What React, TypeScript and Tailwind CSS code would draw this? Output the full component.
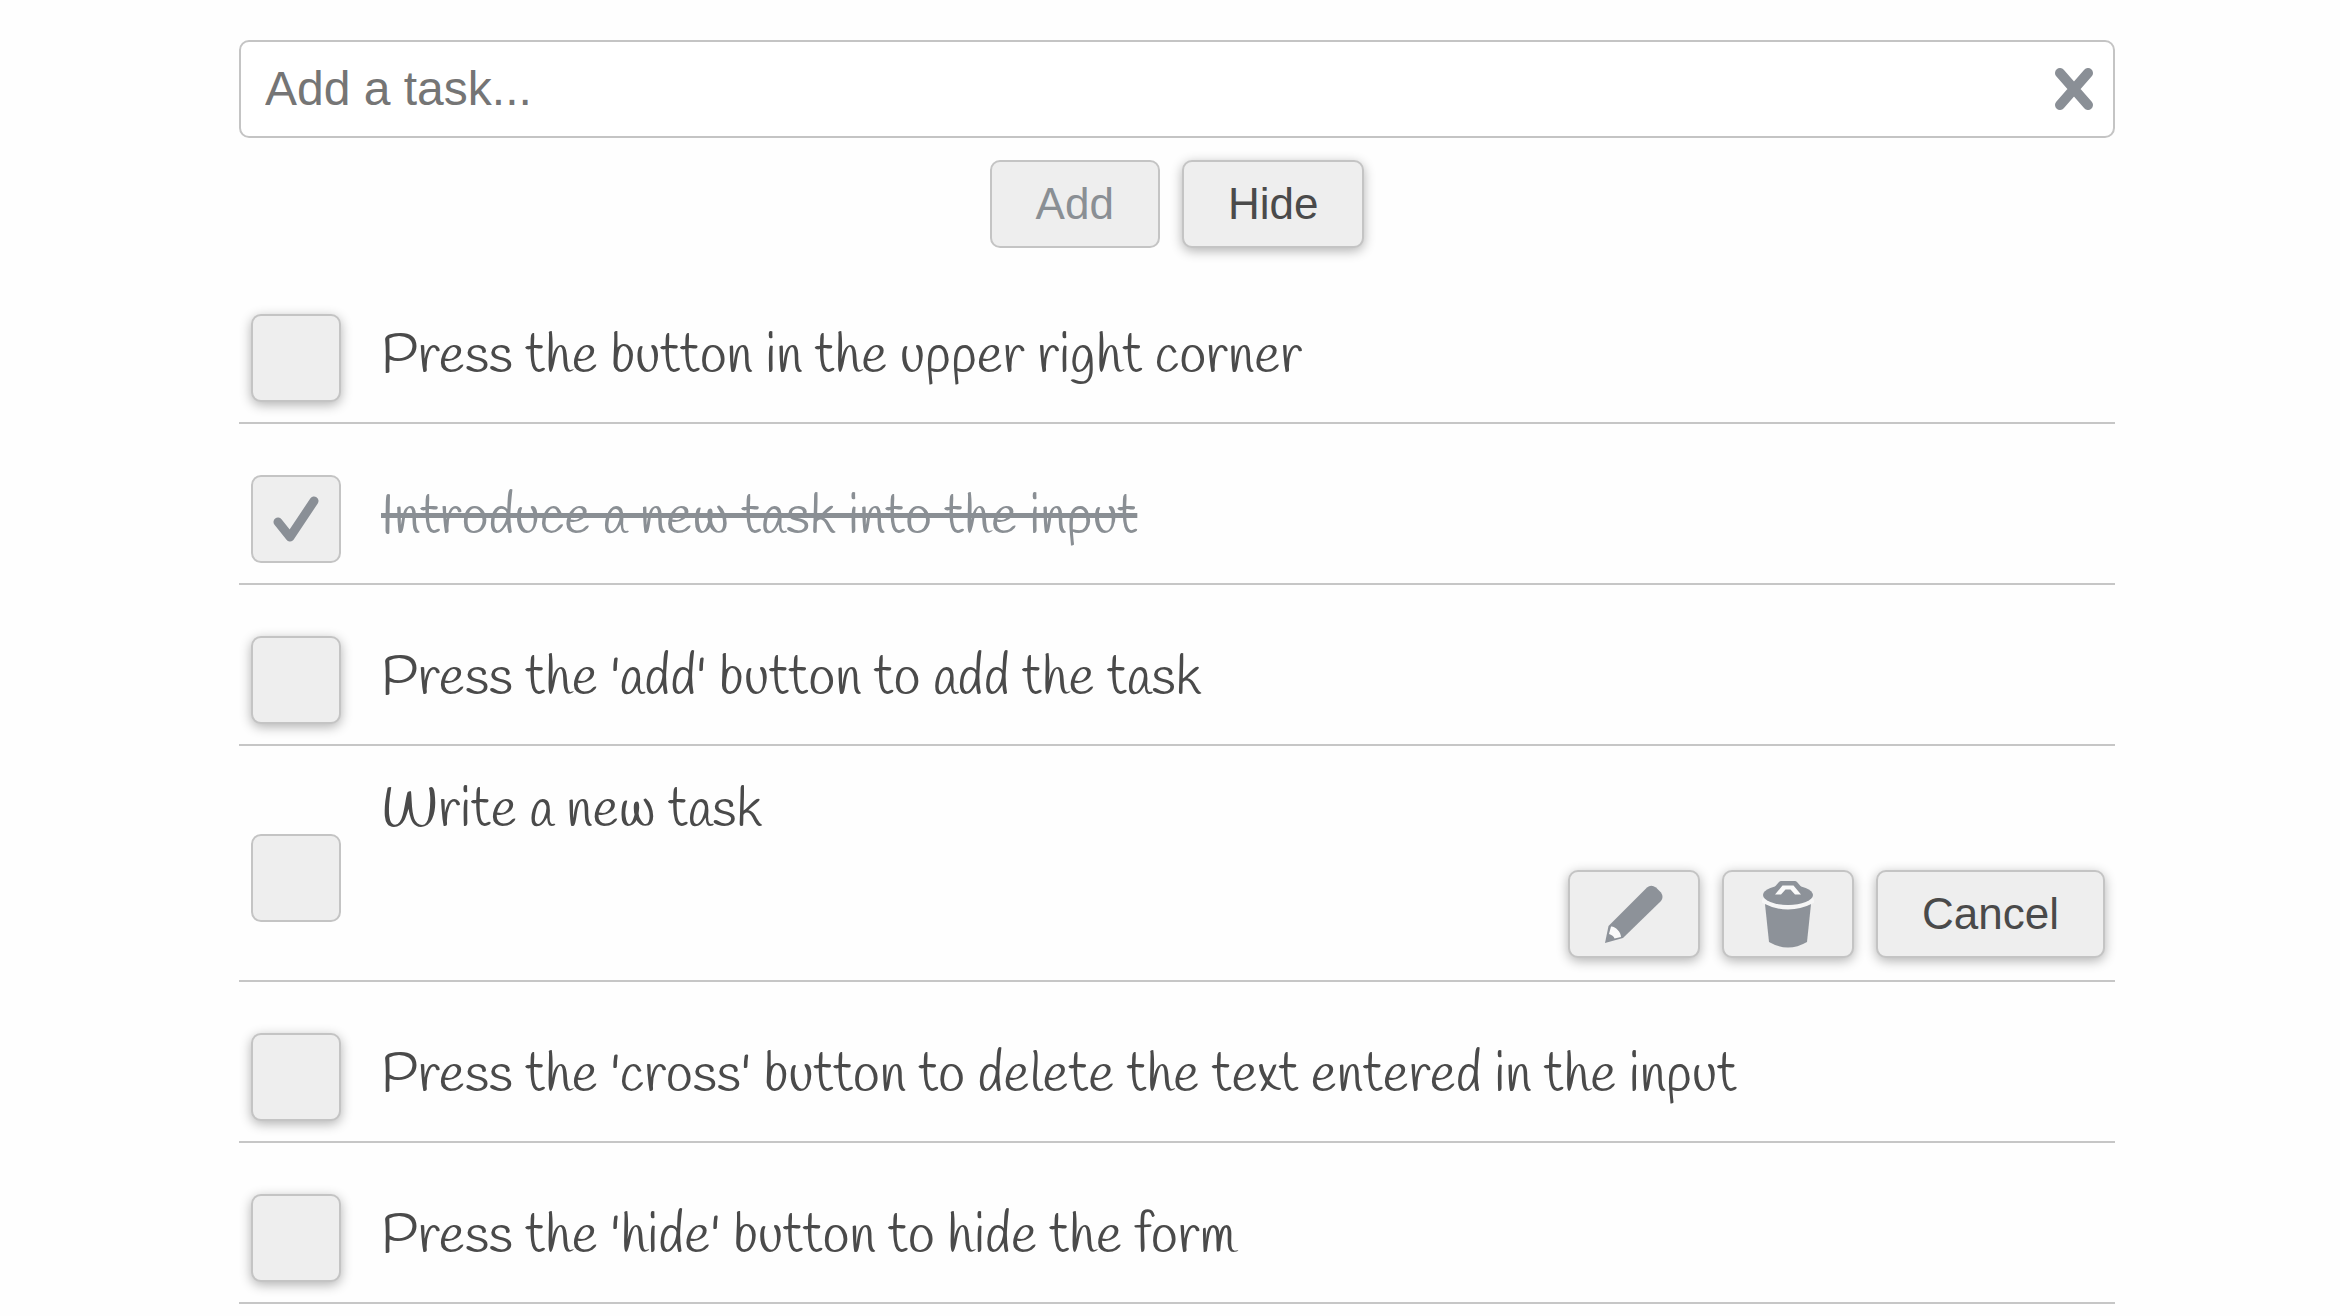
import React from "react";

type Task = { id: string; text: string; state?: "done" | "editing" };

const tasks: Task[] = [
  { id: "press", text: "Press the button in the upper right corner" },
  { id: "introduce", text: "Introduce a new task into the input", state: "done" },
  { id: "add", text: "Press the 'add' button to add the task" },
  { id: "write", text: "Write a new task", state: "editing" },
  { id: "cross", text: "Press the 'cross' button to delete the text entered in the input" },
  { id: "hide", text: "Press the 'hide' button to hide the form" },
];

const buttonBase =
  "flex h-[88px] items-center justify-center rounded-[10px] border-2 border-[#c4c4c4] bg-[#eeeeee]";
const raised = "shadow-[0_3px_12px_rgba(0,0,0,0.3)]";

function CrossIcon() {
  return (
    <svg viewBox="0 0 38 42" className="h-[42px] w-[38px]" aria-hidden="true">
      <path d="M5 5L33 37M33 5L5 37" stroke="#8a8f96" strokeWidth="10" strokeLinecap="round" fill="none" />
    </svg>
  );
}

function CheckIcon() {
  return (
    <svg viewBox="0 0 46 46" className="pointer-events-none col-start-1 row-start-1 h-[46px] w-[46px]" aria-hidden="true">
      <path d="M5 26L17 41L41 5" stroke="#8a8f96" strokeWidth="9" strokeLinecap="round" strokeLinejoin="round" fill="none" />
    </svg>
  );
}

function PencilIcon() {
  return (
    <svg viewBox="0 0 58 58" className="h-[58px] w-[58px]" aria-hidden="true">
      <path d="M0 58L3.500 41L42 2.500Q46 -1 51 2.500L56 7.500Q59 12 56 16L18 53Z" fill="#8d9299" />
      <path d="M6 41.500C10 41 16 47 16 52L9.500 53.500C9 51.500 6.500 49.500 4 49Z" fill="#fafafa" />
    </svg>
  );
}

function TrashIcon() {
  return (
    <svg viewBox="0 0 52 68" className="h-[68px] w-[52px]" aria-hidden="true">
      <path d="M3 24L7 62Q26 73 45 62L49 24Z" fill="#8d9299" />
      <path d="M0 20Q26 34 52 20" stroke="#f6f6f6" strokeWidth="5" fill="none" />
      <ellipse cx="26" cy="15" rx="25" ry="10" fill="#8d9299" />
      <path d="M10 10L17 2Q18 1 19 1H33Q34 1 35 2L42 10Z" fill="#8d9299" />
      <path d="M13 14.500L20.500 5.500H31.500L39 14.500H33L28.500 9.500H23.500L19 14.500Z" fill="#fafafa" />
    </svg>
  );
}

function TaskRow({ task }: { task: Task }) {
  const done = task.state === "done";
  const editing = task.state === "editing";
  return (
    <li
      className={
        editing
          ? "flex items-end gap-10 border-b-2 border-[#c6c6c6] pt-9 pr-2.5 pb-[22px] pl-3"
          : "flex items-center gap-10 border-b-2 border-[#c6c6c6] pt-[51px] pr-2.5 pb-5 pl-3"
      }
    >
      <span className={editing ? "mb-9 grid shrink-0 place-items-center" : "grid shrink-0 place-items-center"}>
        <input
          id={task.id}
          type="checkbox"
          defaultChecked={done}
          disabled={editing}
          className={`col-start-1 row-start-1 h-[88px] w-[90px] appearance-none rounded-[10px] border-2 border-[#c4c4c4] bg-[#eeeeee] ${
            task.state ? "" : raised
          }`}
        />
        {done && <CheckIcon />}
      </span>
      <div className="min-w-0 grow">
        <label
          htmlFor={task.id}
          className={`block font-['Handlee',cursive] text-[55px] leading-[60px] ${
            done ? "text-[#8a8f94]" : "text-[#4a4a4a]"
          }`}
        >
          {done ? <s>{task.text}</s> : task.text}
        </label>
        {editing && (
          <div className="mt-7 flex justify-end gap-[22px]">
            <button type="button" aria-label="Edit" className={`${buttonBase} ${raised} w-[132px]`}>
              <PencilIcon />
            </button>
            <button type="button" aria-label="Delete" className={`${buttonBase} ${raised} w-[132px]`}>
              <TrashIcon />
            </button>
            <button type="button" className={`${buttonBase} ${raised} px-11 text-[44px] text-[#4a4a4a]`}>
              Cancel
            </button>
          </div>
        )}
      </div>
    </li>
  );
}

export default function App() {
  return (
    <main className="min-h-screen bg-[#fefefe] pt-10 pr-[225px] pl-[239px] font-['Liberation_Sans',Arial,sans-serif]">
      <form onSubmit={(e) => e.preventDefault()}>
        <div className="flex h-[98px] items-center rounded-[10px] border-2 border-[#c4c4c4] bg-white pr-5 pl-6">
          <input
            type="text"
            aria-label="Add a task"
            placeholder="Add a task..."
            className="min-w-0 grow bg-transparent text-[48px] text-[#4a4a4a] outline-none placeholder:text-[#757575]"
          />
          <button type="button" aria-label="Clear">
            <CrossIcon />
          </button>
        </div>
        <div className="mt-[22px] flex justify-center gap-[22px]">
          <button type="submit" disabled className={`${buttonBase} px-11 text-[44px] text-[#8a8f94]`}>
            Add
          </button>
          <button type="button" className={`${buttonBase} ${raised} px-11 text-[44px] text-[#4a4a4a]`}>
            Hide
          </button>
        </div>
      </form>
      <ul className="mt-[15px]">
        {tasks.map((task) => (
          <TaskRow key={task.id} task={task} />
        ))}
      </ul>
    </main>
  );
}
